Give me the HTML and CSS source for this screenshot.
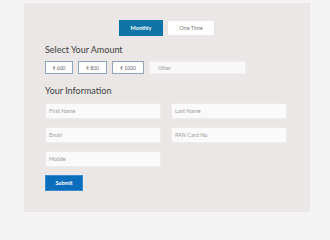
FILE: index.html
```html
<!DOCTYPE html>
<html lang="en">
<head>
<meta charset="utf-8">
<link rel="stylesheet" href="styles.css">
</head>
<body>
<div class="card">
  <div class="toggle">
    <button class="tab active">Monthly</button>
    <button class="tab">One Time</button>
  </div>
  <h2 class="title">Select Your Amount</h2>
  <div class="amounts">
    <button class="amt w600">₹ 600</button>
    <button class="amt w800">₹ 800</button>
    <button class="amt w1000">₹ 1000</button>
    <input class="other" type="text" placeholder="Other">
  </div>
  <h2 class="title info">Your Information</h2>
  <div class="grid">
    <input class="field" type="text" placeholder="First Name">
    <input class="field" type="text" placeholder="Last Name">
    <input class="field" type="text" placeholder="Email">
    <input class="field" type="text" placeholder="PAN Card No">
    <input class="field" type="text" placeholder="Mobile">
  </div>
  <button class="submit">Submit</button>
</div>
</body>
</html>
```

FILE: styles.css
```css
html, body {
  margin: 0;
  padding: 0;
  background: #f4f4f4;
  font-family: Lato, "Open Sans", sans-serif;
}
.card {
  margin: 3px 20px 0 24px;
  height: 209px;
  box-sizing: border-box;
  background: #ebe7e6;
  padding: 17px 22px 0 21px;
}
.toggle {
  display: flex;
  justify-content: center;
  gap: 4px;
  padding-left: 1px;
}
.tab {
  height: 16px;
  margin: 0;
  padding: 0;
  border: 1px solid #e6e6e6;
  background: #ffffff;
  color: #777;
  font-family: inherit;
  font-size: 5.5px;
  width: 48px;
}
.tab.active {
  width: 44px;
  background: #0e74a6;
  border-color: #0e74a6;
  color: #ffffff;
  font-weight: 700;
}
.title {
  margin: 7px 0 0 0;
  font-size: 9px;
  font-weight: 400;
  color: #3e3e3e;
  line-height: 13px;
}
.info {
  margin-top: 10px;
}
.amounts {
  display: flex;
  gap: 5px;
  margin-top: 5px;
  height: 13px;
}
.amt {
  margin: 0;
  padding: 0;
  height: 13px;
  background: #fff;
  border: 1px solid #8ea4bf;
  color: #666;
  font-family: inherit;
  font-size: 5px;
}
.w600 { width: 28px; }
.w800 { width: 29px; }
.w1000 { width: 32px; }
.other {
  margin: 0;
  width: 97px;
  height: 13px;
  box-sizing: border-box;
  border: 1px solid #eeeeee;
  background: #f8f8f8;
  padding: 0 0 0 8px;
  font-family: inherit;
  font-size: 5px;
  outline: none;
}
.grid {
  display: grid;
  grid-template-columns: 116px 116px;
  column-gap: 10px;
  row-gap: 8px;
  margin-top: 6px;
}
.field {
  margin: 0;
  height: 16px;
  box-sizing: border-box;
  border: 1px solid #ececec;
  background: #fafafa;
  padding: 0 0 0 3px;
  font-family: inherit;
  font-size: 5.5px;
  outline: none;
}
::placeholder {
  color: #9a9a9a;
}
.submit {
  display: block;
  margin: 8px 0 0 0;
  width: 38px;
  height: 16px;
  padding: 0;
  background: #0a6ebd;
  border: 1px solid #3b8ad0;
  color: #fff;
  font-family: inherit;
  font-weight: 700;
  font-size: 5.5px;
}
```
